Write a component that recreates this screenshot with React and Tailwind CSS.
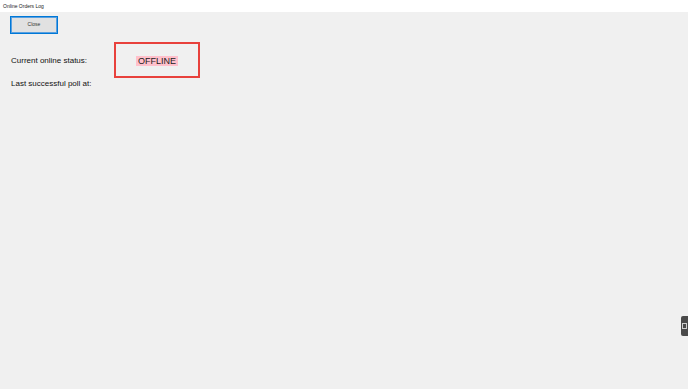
import React from 'react';

const App = () => {
  return (
    <div
      className="relative w-[688px] h-[389px] overflow-hidden bg-[#f0f0f0] text-black"
      style={{ fontFamily: '"Liberation Sans", Arial, sans-serif' }}
    >
      <div className="h-[12px] bg-white flex items-center pl-[3px] text-[5px] leading-none text-[#222]">
        Online Orders Log
      </div>
      <div className="pl-[10px] pt-[4px]">
        <button className="w-[48px] h-[18px] bg-[#e1e1e1] border border-[#0078d7] outline outline-1 outline-[#5aa0e0] -outline-offset-2 text-[5px] text-[#333] flex items-center justify-center">
          Close
        </button>
      </div>
      <div className="flex items-start mt-[8px] pl-[11px]">
        <div className="w-[103px] pt-[15px] text-[8px] leading-none text-[#111]">
          Current online status:
        </div>
        <div className="w-[86px] h-[36px] border-2 border-[#e8413c] flex items-center justify-center pt-[1px]">
          <span className="bg-[#ffc0cb] px-[2px] text-[9px] leading-[10px] text-[#222]">OFFLINE</span>
        </div>
      </div>
      <div className="pl-[11px] mt-[2px] text-[8px] leading-none text-[#111]">
        Last successful poll at:
      </div>
      <div className="absolute right-0 top-[316px] w-[7px] h-[20px] bg-[#4a4a4a] rounded-l-[2px] flex items-center pl-[1px]">
        <div className="w-[5px] h-[6px] border border-[#cfcfcf]" />
      </div>
    </div>
  );
};

export default App;
